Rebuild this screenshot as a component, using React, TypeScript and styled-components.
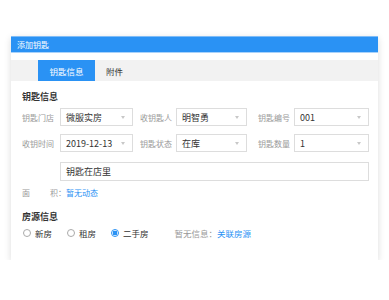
import React from "react";
import styled, { createGlobalStyle } from "styled-components";

const GlobalStyle = createGlobalStyle`
  html, body {
    margin: 0;
    padding: 0;
    background: #fff;
    font-family: "Noto Sans CJK SC", "Noto Sans", sans-serif;
  }
`;

interface IField {
  label: string;
  value: string;
}

const rowOne: IField[] = [
  { label: "钥匙门店", value: "微服实房" },
  { label: "收钥匙人", value: "明智勇" },
  { label: "钥匙编号", value: "001" },
];

const rowTwo: IField[] = [
  { label: "收钥时间", value: "2019-12-13" },
  { label: "钥匙状态", value: "在库" },
  { label: "钥匙数量", value: "1" },
];

const houseTypes = ["新房", "租房", "二手房"];

const App: React.FC = () => {
  return (
    <>
      <GlobalStyle />
      <Page>
        <Card>
          <Header>添加钥匙</Header>
          <TabBar>
            <Tab active>钥匙信息</Tab>
            <Tab>附件</Tab>
          </TabBar>
          <Body>
            <SectionTitle>钥匙信息</SectionTitle>
            <FormGrid>
              {[rowOne, rowTwo].map((row) =>
                row.map((f) => (
                  <React.Fragment key={f.label}>
                    <Label>{f.label}</Label>
                    <Select>
                      <span>{f.value}</span>
                      <Arrow />
                    </Select>
                  </React.Fragment>
                ))
              )}
              <Spacer />
              <TextInput>钥匙在店里</TextInput>
            </FormGrid>
            <InfoLine>
              <AreaLabel>
                <span>面</span>
                <span>积：</span>
              </AreaLabel>
              <Link>暂无动态</Link>
            </InfoLine>
            <SectionTitle top={12}>房源信息</SectionTitle>
            <RadioRow>
              {houseTypes.map((t) => (
                <RadioItem key={t}>
                  <RadioCircle checked={t === "二手房"} />
                  {t}
                </RadioItem>
              ))}
              <Muted>
                暂无信息：<Link>关联房源</Link>
              </Muted>
            </RadioRow>
          </Body>
        </Card>
      </Page>
    </>
  );
};

export default App;

const Page = styled.div`
  padding: 36px 11px 0 11px;
  width: 389px;
  box-sizing: border-box;
`;

const Card = styled.div`
  width: 367px;
  background: #fff;
  box-shadow: 0 2px 7px rgba(0, 0, 0, 0.14);
  padding-bottom: 21px;
`;

const Header = styled.div`
  height: 17px;
  background: #2a92f4;
  border-top: 1px solid #7fbcf7;
  border-bottom: 1px solid #a9d2fa;
  box-sizing: border-box;
  color: #fff;
  font-size: 8px;
  line-height: 15px;
  padding-left: 6px;
`;

const TabBar = styled.div`
  margin-top: 7px;
  height: 21px;
  background: #f2f2f2;
  display: flex;
  padding-left: 27px;
`;

const Tab = styled.div<{ active?: boolean }>`
  width: 57px;
  height: 21px;
  display: flex;
  align-items: center;
  justify-content: center;
  font-size: 8.5px;
  color: ${(p) => (p.active ? "#fff" : "#333")};
  background: ${(p) => (p.active ? "#2a92f4" : "transparent")};
  ${(p) => (!p.active ? "width: auto; padding: 0 11px;" : "")}
`;

const Body = styled.div`
  padding: 0 9px 0 11px;
`;

const SectionTitle = styled.div<{ top?: number }>`
  margin-top: ${(p) => p.top ?? 10}px;
  font-size: 9px;
  font-weight: 700;
  color: #333;
  line-height: 12px;
`;

const FormGrid = styled.div`
  margin-top: 5px;
  display: grid;
  grid-template-columns: 38px 73px 43px 71px 47px 75px;
  grid-auto-rows: 18px;
  row-gap: 8px;
  & > :last-child {
    grid-column: span 5;
    height: 19px;
    margin-top: 2px;
  }
`;

const Label = styled.div`
  font-size: 8px;
  color: #999;
  display: flex;
  align-items: center;
  justify-content: flex-end;
  padding-right: 4px;
  &:first-child,
  &:nth-child(7) {
    justify-content: flex-start;
  }
`;

const Select = styled.div`
  border: 1px solid #ddd;
  box-sizing: border-box;
  display: flex;
  align-items: center;
  justify-content: space-between;
  padding: 0 7px 0 5px;
  font-size: 9px;
  color: #333;
`;

const Arrow = styled.i`
  width: 0;
  height: 0;
  border-left: 2.5px solid transparent;
  border-right: 2.5px solid transparent;
  border-top: 3px solid #c8c8c8;
`;

const Spacer = styled.div``;

const TextInput = styled.div`
  border: 1px solid #ddd;
  box-sizing: border-box;
  display: flex;
  align-items: center;
  padding-left: 5px;
  font-size: 9px;
  color: #333;
`;

const InfoLine = styled.div`
  margin-top: 9px;
  display: flex;
  align-items: center;
  font-size: 8px;
  line-height: 12px;
`;

const AreaLabel = styled.div`
  width: 44px;
  display: flex;
  justify-content: space-between;
  color: #999;
`;

const Link = styled.span`
  color: #2a92f4;
`;

const RadioRow = styled.div`
  margin-top: 4px;
  display: flex;
  align-items: center;
  font-size: 8.5px;
  line-height: 12px;
  color: #333;
  padding-left: 1px;
`;

const RadioItem = styled.label`
  display: flex;
  align-items: center;
  gap: 4px;
  margin-right: 15px;
`;

const RadioCircle = styled.span<{ checked?: boolean }>`
  width: 8px;
  height: 8px;
  border-radius: 50%;
  box-sizing: border-box;
  border: 1px solid ${(p) => (p.checked ? "#2a92f4" : "#aaa")};
  background: ${(p) =>
    p.checked ? "radial-gradient(circle, #2a92f4 0 2.2px, #fff 2.6px)" : "#fff"};
`;

const Muted = styled.span`
  color: #999;
  margin-left: 11px;
`;
